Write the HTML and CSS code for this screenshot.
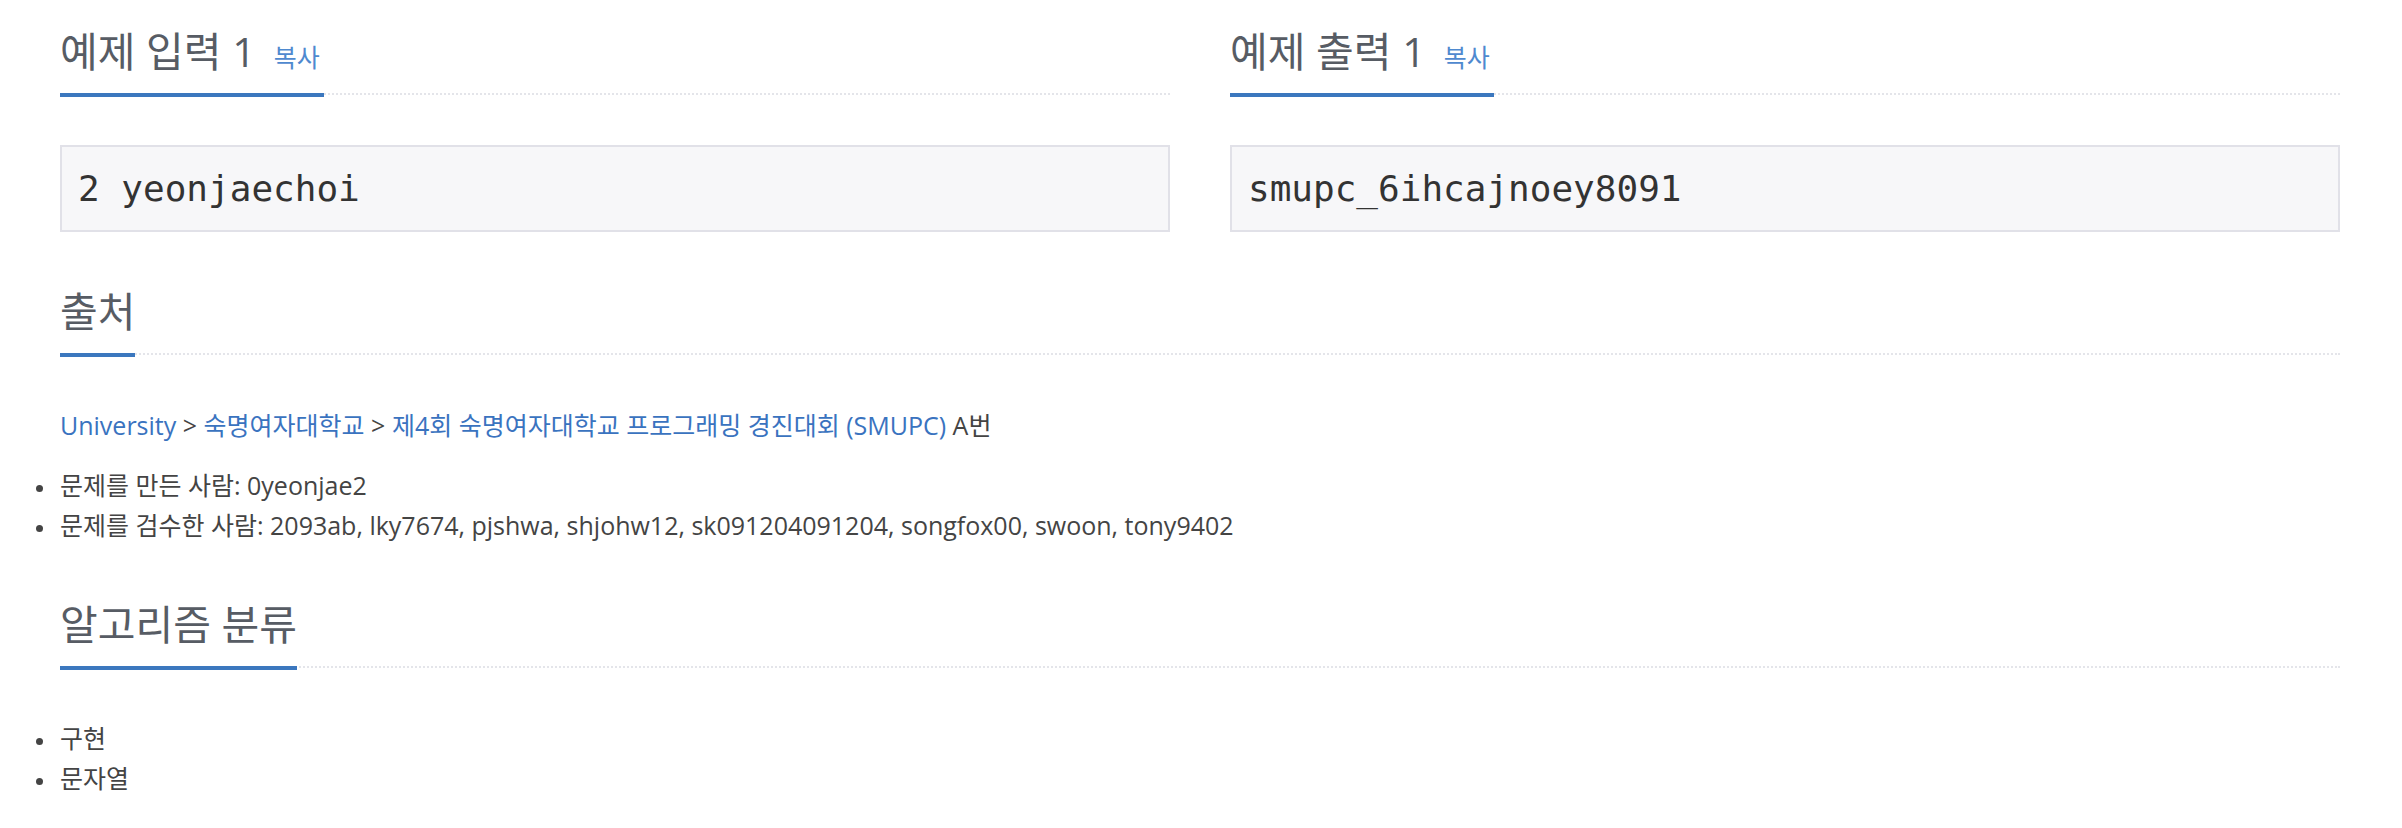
FILE: index.html
```html
<!DOCTYPE html>
<html lang="ko">
<head>
<meta charset="utf-8">
<title>문제</title>
<link rel="stylesheet" href="styles.css">
</head>
<body>
<div class="page">
  <div class="samples">
    <section class="sample-col">
      <div class="headline"><h2>예제 입력 1<span class="copy">복사</span></h2></div>
      <pre class="sampledata">2 yeonjaechoi</pre>
    </section>
    <section class="sample-col">
      <div class="headline"><h2>예제 출력 1<span class="copy">복사</span></h2></div>
      <pre class="sampledata">smupc_6ihcajnoey8091</pre>
    </section>
  </div>

  <section class="block">
    <div class="headline"><h2>출처</h2></div>
    <p class="source"><a href="#">University</a> &gt; <a href="#">숙명여자대학교</a> &gt; <a href="#">제4회 숙명여자대학교 프로그래밍 경진대회 (SMUPC)</a> A번</p>
    <ul class="list">
      <li>문제를 만든 사람: 0yeonjae2</li>
      <li>문제를 검수한 사람: 2093ab, lky7674, pjshwa, shjohw12, sk091204091204, songfox00, swoon, tony9402</li>
    </ul>
  </section>

  <section class="block">
    <div class="headline"><h2>알고리즘 분류</h2></div>
    <ul class="list">
      <li>구현</li>
      <li>문자열</li>
    </ul>
  </section>
</div>
</body>
</html>
```

FILE: styles.css
```css
html, body {
  margin: 0;
  padding: 0;
  background: #ffffff;
}

body {
  font-family: "Open Sans", "Noto Sans CJK KR", sans-serif;
  font-size: 25px;
  line-height: 40px;
  color: #444444;
}

.page {
  padding: 28px 62px 40px 60px;
}

.samples {
  display: grid;
  grid-template-columns: 1fr 1fr;
  column-gap: 60px;
}

.headline {
  display: flex;
  align-items: flex-end;
  border-bottom: 2px dotted #e4e5ea;
  margin-bottom: 50px;
}

.headline h2 {
  margin: 0 0 -4px 0;
  padding: 0 0 19px 0;
  font-family: "Open Sans", "Noto Sans CJK KR", sans-serif;
  font-size: 41px;
  line-height: 46px;
  font-weight: 400;
  color: #575c64;
  border-bottom: 4px solid #3b77be;
}

.copy {
  margin-left: 18px;
  padding-right: 4px;
  font-size: 25px;
  line-height: 24px;
  color: #4f89cf;
}

.sampledata {
  margin: 0;
  padding: 17px 16px;
  font-family: "DejaVu Sans Mono", "Liberation Mono", monospace;
  font-size: 36px;
  line-height: 49px;
  color: #333333;
  background: #f7f7f9;
  border: 2px solid #e1e1e8;
}

.block {
  margin-top: 56px;
}

.source {
  margin: 0 0 20px 0;
}

.source a {
  color: #3a73bf;
  text-decoration: none;
}

.list {
  margin: 0;
  padding: 0;
  list-style: none;
}

.list li::before {
  content: "";
  display: inline-block;
  width: 7px;
  height: 7px;
  border-radius: 50%;
  background: #444444;
  margin-left: -24px;
  margin-right: 17px;
  vertical-align: middle;
}
```
